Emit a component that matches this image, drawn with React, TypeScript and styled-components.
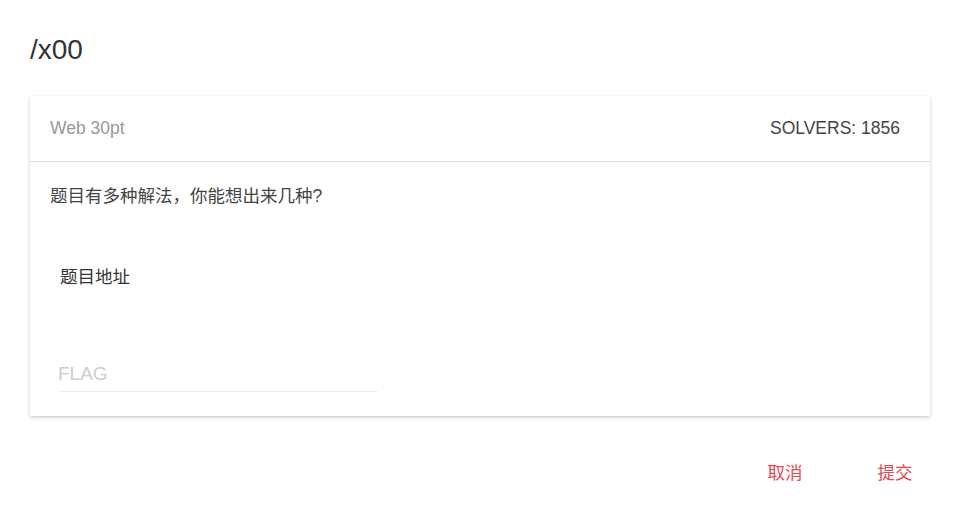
import styled, { createGlobalStyle } from "styled-components";

const Global = createGlobalStyle`
  html, body {
    margin: 0;
    padding: 0;
    background: #fff;
  }
  body {
    font-family: "Liberation Sans", "Noto Sans CJK SC", sans-serif;
    color: #444;
  }
`;

const Dialog = styled.div`
  width: 959px;
  height: 506px;
  display: flex;
  flex-direction: column;
  background: #fff;
`;

const Title = styled.h2`
  margin: 0;
  padding: 34px 30px 30px;
  font-size: 28px;
  line-height: 32px;
  font-weight: 400;
  color: #333;
`;

const Card = styled.section`
  margin: 0 29px 0 30px;
  background: #fff;
  box-shadow: 0 2px 4px rgba(0, 0, 0, 0.12), 0 1px 2px rgba(0, 0, 0, 0.08), 0 0 3px rgba(0, 0, 0, 0.06);
`;

const CardHead = styled.div`
  height: 65px;
  display: flex;
  align-items: center;
  justify-content: space-between;
  padding: 0 30px 0 20px;
  border-bottom: 1px solid #ddd;
  font-size: 17.5px;
`;

const Category = styled.span`
  color: #999;
`;

const Solvers = styled.span`
  color: #444;
`;

const CardBody = styled.div`
  padding: 22px 20px 24px;
`;

const Desc = styled.p`
  margin: 0;
  font-size: 17.5px;
  line-height: 24px;
  color: #444;
`;

const Link = styled.a`
  display: block;
  margin: 57px 0 0 10px;
  font-size: 17.5px;
  line-height: 24px;
  color: #333;
  text-decoration: none;
`;

const Flag = styled.input`
  display: block;
  margin: 74px 0 0 8px;
  width: 320px;
  height: 29px;
  padding: 0 0 7px;
  box-sizing: border-box;
  border: none;
  border-bottom: 1px solid #eee;
  outline: none;
  font-family: inherit;
  font-size: 19px;
  color: #444;
  background: transparent;

  &::placeholder {
    color: #ccc;
  }
`;

const Actions = styled.div`
  display: flex;
  justify-content: flex-end;
  gap: 20px;
  padding: 41px 19px 0 0;
`;

const Button = styled.button`
  width: 90px;
  height: 28px;
  padding: 0;
  border: none;
  background: transparent;
  font-family: inherit;
  font-size: 17.5px;
  color: #e5474f;
  cursor: pointer;
`;

export default function App() {
  return (
    <Dialog>
      <Global />
      <Title>/x00</Title>
      <Card>
        <CardHead>
          <Category>Web 30pt</Category>
          <Solvers>SOLVERS: 1856</Solvers>
        </CardHead>
        <CardBody>
          <Desc>题目有多种解法，你能想出来几种?</Desc>
          <Link href="#">题目地址</Link>
          <Flag placeholder="FLAG" />
        </CardBody>
      </Card>
      <Actions>
        <Button>取消</Button>
        <Button>提交</Button>
      </Actions>
    </Dialog>
  );
}
